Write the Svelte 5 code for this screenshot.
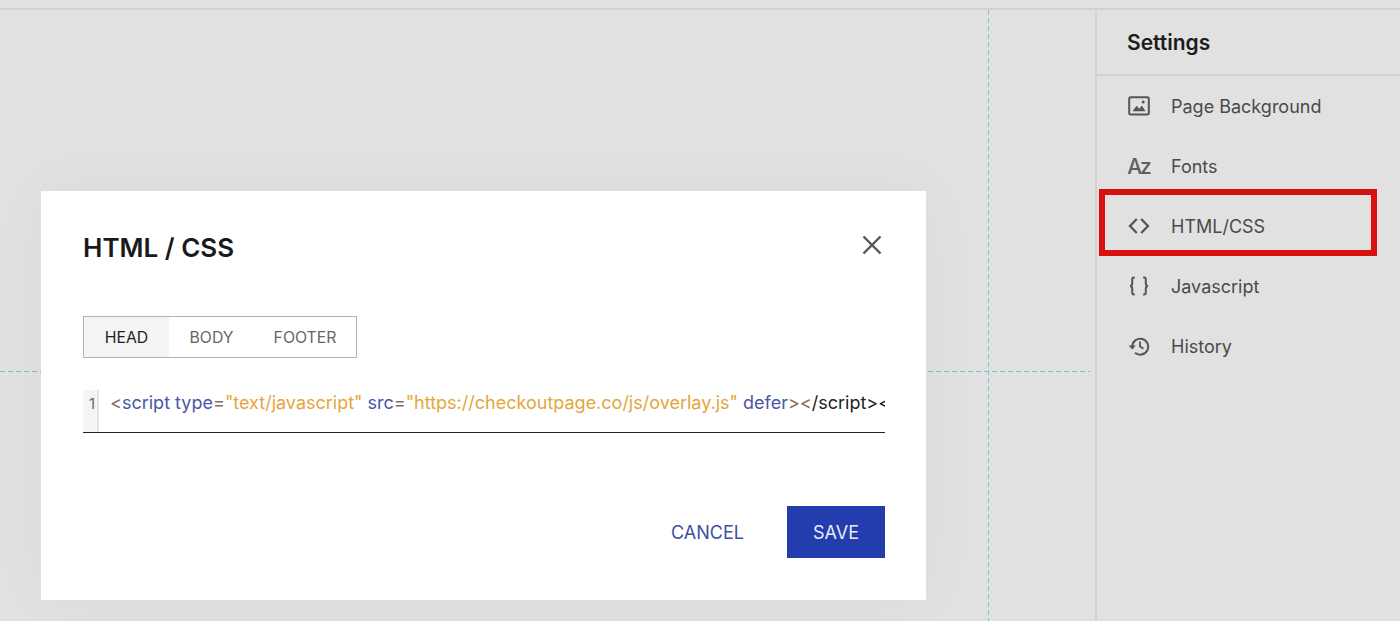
<script>
  const navItems = [
    { label: 'Page Background', icon: 'image' },
    { label: 'Fonts', icon: 'fonts' },
    { label: 'HTML/CSS', icon: 'code', highlighted: true },
    { label: 'Javascript', icon: 'braces' },
    { label: 'History', icon: 'history' }
  ];
  const tabs = ['HEAD', 'BODY', 'FOOTER'];
  let activeTab = $state('HEAD');
</script>

<div class="page">
  <div class="topbar"></div>
  <div class="main">
    <div class="canvas">
      <div class="guide-v"></div>
      <div class="guide-h"></div>
    </div>
    <aside class="sidebar">
      <div class="side-title">Settings</div>
      <nav class="side-nav">
        {#each navItems as item}
          <div class="nav-item" class:highlighted={item.highlighted}>
            <span class="nav-icon">
              {#if item.icon === 'image'}
                <svg width="22" height="20" viewBox="0 0 22 20" fill="none">
                  <rect x="1.2" y="1.2" width="19.6" height="17.2" rx="1.5" stroke="#555" stroke-width="2"/>
                  <path d="M4.5 15.2 L8.6 9.8 L11.4 12.8 L13.8 9.4 L17.5 15.2 Z" fill="#555"/>
                  <circle cx="15.2" cy="6" r="1.5" fill="#555"/>
                </svg>
              {:else if item.icon === 'fonts'}
                <span class="az">Az</span>
              {:else if item.icon === 'code'}
                <svg width="22" height="18" viewBox="0 0 22 18" fill="none">
                  <path d="M8.8 2 L2 9 L8.8 16 M13.2 2 L20 9 L13.2 16" stroke="#555" stroke-width="2.3"/>
                </svg>
              {:else if item.icon === 'braces'}
                <svg width="20" height="20" viewBox="0 0 20 20" fill="none">
                  <path d="M5.8 1.5 H5 C3.6 1.5 3.2 2.3 3.2 3.5 V7.6 C3.2 9 2.6 9.7 1.2 10 C2.6 10.3 3.2 11 3.2 12.4 V16.5 C3.2 17.7 3.6 18.5 5 18.5 H5.8 M14.2 1.5 H15 C16.4 1.5 16.8 2.3 16.8 3.5 V7.6 C16.8 9 17.4 9.7 18.8 10 C17.4 10.3 16.8 11 16.8 12.4 V16.5 C16.8 17.7 16.4 18.5 15 18.5 H14.2" stroke="#555" stroke-width="2"/>
                </svg>
              {:else}
                <svg width="22" height="20" viewBox="0 0 22 20" fill="none">
                  <path d="M4.2 10 A8 8 0 1 1 7 16.8" stroke="#555" stroke-width="2"/>
                  <path d="M0.6 9.4 H7.8 L4.2 13.4 Z" fill="#555"/>
                  <path d="M12 5.6 V10.6 L15.4 12.6" stroke="#555" stroke-width="1.8"/>
                </svg>
              {/if}
            </span>
            <span class="nav-label">{item.label}</span>
          </div>
        {/each}
      </nav>
    </aside>
  </div>

  <div class="modal">
    <div class="modal-head">
      <h2>HTML / CSS</h2>
      <button class="close" aria-label="Close">
        <svg width="20" height="20" viewBox="0 0 20 20" fill="none">
          <path d="M1.5 1.5 L18.5 18.5 M18.5 1.5 L1.5 18.5" stroke="#555" stroke-width="2.4"/>
        </svg>
      </button>
    </div>

    <div class="tabs">
      {#each tabs as tab}
        <button class="tab" class:active={activeTab === tab} onclick={() => (activeTab = tab)}>{tab}</button>
      {/each}
    </div>

    <div class="editor">
      <div class="gutter">1</div>
      <div class="code"><span class="br">&lt;</span><span class="kw">script</span> <span class="kw">type</span><span class="br">=</span><span class="str">"text/javascript"</span> <span class="kw">src</span><span class="br">=</span><span class="str">"https://checkoutpage.co/js/overlay.js"</span> <span class="kw">defer</span><span class="br">&gt;</span><span class="br">&lt;</span><span class="plain">/script&gt;&lt;/script&gt;</span></div>
    </div>

    <div class="actions">
      <button class="cancel">CANCEL</button>
      <button class="save">SAVE</button>
    </div>
  </div>
</div>

<style>
  :global(body) {
    margin: 0;
    background: #e1e1e1;
  }

  .page {
    position: relative;
    width: 1400px;
    height: 621px;
    overflow: hidden;
    display: flex;
    flex-direction: column;
    background: #e1e1e1;
    font-family: Inter, "Liberation Sans", sans-serif;
    color: #1c1c1c;
  }

  .topbar {
    height: 10px;
    box-sizing: border-box;
    border-bottom: 2px solid #d2d2d2;
    flex: none;
  }

  .main {
    flex: 1;
    display: flex;
    min-height: 0;
  }

  .canvas {
    position: relative;
    flex: 1;
  }

  .guide-v {
    position: absolute;
    left: 988px;
    top: 0;
    bottom: 0;
    width: 1px;
    background: repeating-linear-gradient(180deg, #78c4d6 0 5px, transparent 5px 8px);
  }

  .guide-h {
    position: absolute;
    left: 0;
    width: 1090px;
    top: 361px;
    height: 1px;
    background: repeating-linear-gradient(90deg, #78c4d6 0 5px, transparent 5px 8px);
  }

  .sidebar {
    width: 305px;
    flex: none;
    box-sizing: border-box;
    border-left: 2px solid #d2d2d2;
  }

  .side-title {
    height: 66px;
    box-sizing: border-box;
    padding-left: 30px;
    display: flex;
    align-items: center;
    font-size: 21px;
    font-weight: 600;
    border-bottom: 2px solid #d2d2d2;
  }

  .side-nav {
    display: flex;
    flex-direction: column;
  }

  .nav-item {
    position: relative;
    height: 60px;
    display: flex;
    align-items: center;
    padding-left: 30px;
    gap: 21px;
    font-size: 18px;
    color: #4a4a4a;
  }

  .nav-item.highlighted::after {
    content: '';
    position: absolute;
    left: 2px;
    top: -7px;
    width: 278px;
    height: 67px;
    box-sizing: border-box;
    border: 6px solid #d91010;
  }

  .nav-icon {
    width: 23px;
    display: flex;
    justify-content: center;
    align-items: center;
  }

  .az {
    font-size: 21px;
    font-weight: 500;
    letter-spacing: -2px;
    color: #5e5e5e;
  }

  .modal {
    position: absolute;
    left: 41px;
    top: 191px;
    width: 885px;
    height: 409px;
    box-sizing: border-box;
    padding: 0 41px 0 42px;
    background: #fff;
    box-shadow: 0 0 60px rgba(0, 0, 0, 0.035);
    display: flex;
    flex-direction: column;
  }

  .modal-head {
    height: 125px;
    flex: none;
    display: flex;
    justify-content: space-between;
    align-items: flex-start;
  }

  .modal-head h2 {
    margin: 40px 0 0;
    font-size: 26px;
    line-height: 34px;
    font-weight: 600;
    color: #1a1a1a;
  }

  .close {
    margin-top: 44px;
    padding: 0;
    margin-right: 3px;
    border: none;
    background: none;
    line-height: 0;
  }

  .tabs {
    align-self: flex-start;
    display: flex;
    border: 1px solid #b4b4b4;
    height: 42px;
    box-sizing: border-box;
    width: 274px;
  }

  .tab {
    border: none;
    background: #fff;
    font: inherit;
    font-size: 15.8px;
    color: #666;
    padding: 0;
    width: 85px;
  }

  .tab.active {
    background: #f4f4f4;
    color: #1f1f1f;
  }

  .tab:last-child {
    flex: 1;
  }

  .editor {
    margin-top: 32px;
    height: 43px;
    box-sizing: border-box;
    display: flex;
    border-bottom: 1px solid #222;
    overflow: hidden;
  }

  .gutter {
    width: 16px;
    flex: none;
    box-sizing: border-box;
    background: #f4f4f4;
    border-right: 2px solid #e4e4e4;
    font-size: 15px;
    color: #666;
    text-align: right;
    padding: 5px 2px 0 0;
    line-height: 17px;
  }

  .code {
    padding: 2px 0 0 11px;
    font-size: 18px;
    line-height: 22px;
    white-space: nowrap;
  }

  .kw { color: #4a58a8; }
  .br { color: #7d6e62; }
  .str { color: #e4a63c; }
  .plain { color: #222; }

  .actions {
    margin-top: 73px;
    display: flex;
    justify-content: flex-end;
    align-items: center;
    gap: 43px;
  }

  .cancel, .save {
    font: inherit;
    font-size: 18px;
    border: none;
    padding: 0;
  }

  .cancel {
    background: none;
    color: #3d4fa3;
  }

  .save {
    width: 98px;
    height: 52px;
    background: #233dae;
    color: #e8ebf7;
  }
</style>
